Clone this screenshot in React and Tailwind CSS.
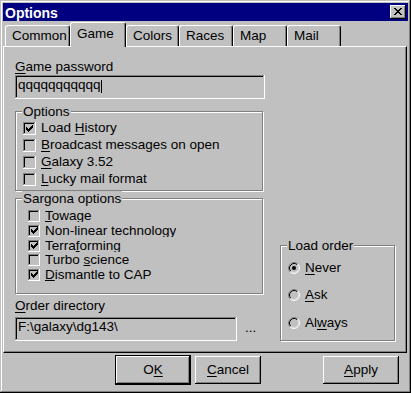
import React from 'react';

const raised = 'shadow-[inset_-1px_-1px_#000,inset_1px_1px_#fff,inset_-2px_-2px_#808080]';
const sunken = 'shadow-[inset_-1px_-1px_#fff,inset_1px_1px_#808080,inset_-2px_-2px_#c0c0c0,inset_2px_2px_#000]';
const etched = 'border border-[#808080] shadow-[1px_1px_0_#fff,inset_1px_1px_0_#fff]';

function Key({ children, tight }) {
  return <u className={tight ? 'decoration-1 underline-offset-[1px]' : 'decoration-1 underline-offset-[2px]'}>{children}</u>;
}

const CHECK = 'M9 3h1v1h-1z M8 4h2v1h-2z M3 5h1v1h-1z M7 5h3v1h-3z M3 6h2v1h-2z M6 6h3v1h-3z M3 7h5v1h-5z M4 8h3v1h-3z M5 9h1v1h-1z';

function CheckBox({ checked, small }) {
  return (
    <span className={small ? `block h-[12px] w-[12px] shrink-0 ${sunken}` : `block h-[13px] w-[13px] shrink-0 ${sunken}`}>
      {checked && (
        <svg width={small ? 12 : 13} height={small ? 12 : 13} viewBox={small ? '0 1 12 12' : '0 0 13 13'} shapeRendering="crispEdges">
          <path d={CHECK} fill="#000" />
        </svg>
      )}
    </span>
  );
}

function Radio({ checked }) {
  return (
    <svg width="12" height="12" viewBox="0 0 12 12" className="shrink-0">
      <path d="M2.11 9.89 A5.5 5.5 0 0 1 9.89 2.11" fill="none" stroke="#808080" strokeWidth="1" />
      <path d="M9.89 2.11 A5.5 5.5 0 0 1 2.11 9.89" fill="none" stroke="#fff" strokeWidth="1" />
      <path d="M2.82 9.18 A4.5 4.5 0 0 1 9.18 2.82" fill="none" stroke="#000" strokeWidth="1" />
      <path d="M9.18 2.82 A4.5 4.5 0 0 1 2.82 9.18" fill="none" stroke="#dfdfdf" strokeWidth="1" />
      {checked && <circle cx="6" cy="6" r="2" fill="#000" />}
    </svg>
  );
}

const tabs = [
  { label: 'Common', w: 'w-[65px]' },
  { label: 'Game', w: 'w-[56px]', active: true },
  { label: 'Colors', w: 'w-[53px]' },
  { label: 'Races', w: 'w-[54px]' },
  { label: 'Map', w: 'w-[54px]' },
  { label: 'Mail', w: 'w-[54px]' },
];

const sargona = [
  { label: <><Key tight>T</Key>owage</>, checked: false, h: 'h-[15px]' },
  { label: 'Non-linear technology', checked: true, h: 'h-[15px]' },
  { label: <>Terra<Key tight>f</Key>orming</>, checked: true, h: 'h-[14px]' },
  { label: <>Turbo <Key tight>s</Key>cience</>, checked: false, h: 'h-[15px]' },
  { label: <><Key tight>D</Key>ismantle to CAP</>, checked: true, h: 'h-[15px]' },
];

export default function App() {
  return (
    <div className="h-[393px] w-[411px] bg-[#c0c0c0] p-[3px] font-['Liberation_Sans',Arial,sans-serif] text-[13.5px] leading-[16px] text-black shadow-[inset_-1px_-1px_#000,inset_1px_1px_#c0c0c0,inset_-2px_-2px_#808080,inset_2px_2px_#fff]">
      {/* title bar */}
      <div className="flex h-[18px] items-start justify-between bg-[#000080] pl-[2px] pr-[2px]">
        <span className="pt-[2px] text-[14px] font-bold text-white">Options</span>
        <span className={`mt-[2px] flex h-[14px] w-[16px] items-center justify-center bg-[#c0c0c0] ${raised}`}>
          <svg width="16" height="14" viewBox="0 0 16 14" shapeRendering="crispEdges">
            <path d="M4 3h2v1h-2z M10 3h2v1h-2z M5 4h2v1h-2z M9 4h2v1h-2z M6 5h4v1h-4z M7 6h2v1h-2z M6 7h4v1h-4z M5 8h2v1h-2z M9 8h2v1h-2z M4 9h2v1h-2z M10 9h2v1h-2z" fill="#000" />
          </svg>
        </span>
      </div>

      {/* tabs */}
      <div className="flex h-[25px] items-end pl-[2px]">
        {tabs.map((t) =>
          t.active ? (
            <div key={t.label} className={`relative z-10 -mb-[1px] h-[25px] ${t.w} rounded-t-[3px] border-l border-t border-r border-l-white border-t-white border-r-black bg-[#c0c0c0] pl-[6px] pt-[3px] shadow-[inset_-1px_0_#808080]`}>
              {t.label}
            </div>
          ) : (
            <div key={t.label} className={`h-[21px] ${t.w} rounded-t-[3px] border-l border-t border-r border-l-white border-t-white border-r-black pl-[6px] pt-[2px] shadow-[inset_-1px_0_#808080]`}>
              {t.label}
            </div>
          )
        )}
      </div>

      {/* tab page */}
      <div className="flex h-[307px] w-[404px] items-end border-b border-l border-r border-t border-b-black border-l-white border-r-black border-t-white pb-[11px] pl-[11px] shadow-[inset_-1px_-1px_#808080]">
        <div className="flex w-[250px] flex-col">
          <div>
            <Key>G</Key>ame password
          </div>
          <div className={`flex h-[24px] items-start pl-[3px] pt-[2px] ${sunken}`}>
            <span>qqqqqqqqqqq</span>
            <span className="mt-[3px] h-[13px] w-[1px] bg-black" />
          </div>

          <div className={`relative mt-[12px] h-[80px] w-[248px] ${etched} pl-[7px] pt-[7px]`}>
            <span className="absolute left-[6px] top-[-8px] bg-[#c0c0c0] px-[1px]">Options</span>
            {[
              { label: <>Load <Key>H</Key>istory</>, checked: true },
              { label: <><Key>B</Key>roadcast messages on open</>, checked: false },
              { label: <><Key>G</Key>alaxy 3.52</>, checked: false },
              { label: <><Key>L</Key>ucky mail format</>, checked: false },
            ].map((r, i) => (
              <div key={i} className="flex h-[17px] items-start gap-[5px] leading-[17px]">
                <span className="mt-[3px]">
                  <CheckBox checked={r.checked} />
                </span>
                <span>{r.label}</span>
              </div>
            ))}
          </div>

          <div className={`relative mt-[7px] h-[96px] w-[248px] ${etched} pl-[12px] pt-[9px]`}>
            <span className="absolute left-[6px] top-[-8px] bg-[#c0c0c0] px-[1px]">Sargona options</span>
            {sargona.map((r, i) => (
              <div key={i} className={`flex ${r.h} items-start gap-[5px]`}>
                <span className="mt-[2px]">
                  <CheckBox checked={r.checked} small />
                </span>
                <span className="block h-[14px] overflow-hidden leading-[15px]">{r.label}</span>
              </div>
            ))}
          </div>

          <div className="mt-[4px]">
            <Key>O</Key>rder directory
          </div>
          <div className="mt-[3px] flex items-start">
            <div className={`flex h-[24px] w-[222px] items-start pl-[3px] pt-[2px] ${sunken}`}>F:\galaxy\dg143\</div>
            <span className="ml-[8px] pt-[3px]">...</span>
          </div>
        </div>

        <div className={`relative ml-[15px] h-[96px] w-[115px] ${etched} pl-[7px] pt-[14px]`}>
          <span className="absolute left-[6px] top-[-8px] bg-[#c0c0c0] px-[1px]">Load order</span>
          <div className="flex h-[16px] items-center gap-[5px]">
            <Radio checked />
            <span><Key>N</Key>ever</span>
          </div>
          <div className="mt-[11px] flex h-[16px] items-center gap-[5px]">
            <Radio />
            <span><Key>A</Key>sk</span>
          </div>
          <div className="mt-[12px] flex h-[16px] items-center gap-[5px]">
            <Radio />
            <span>Al<Key>w</Key>ays</span>
          </div>
        </div>
      </div>

      {/* buttons */}
      <div className="flex items-start pl-[112px] pt-[2px]">
        <div className="h-[30px] w-[76px] border border-black">
          <div className={`flex h-full w-full items-center justify-center ${raised}`}>
            O<Key>K</Key>
          </div>
        </div>
        <div className={`ml-[4px] mt-[1px] flex h-[28px] w-[66px] items-center justify-center ${raised}`}>
          <Key>C</Key>ancel
        </div>
        <div className={`ml-[62px] mt-[1px] flex h-[28px] w-[76px] items-center justify-center ${raised}`}>
          <Key>A</Key>pply
        </div>
      </div>
    </div>
  );
}
